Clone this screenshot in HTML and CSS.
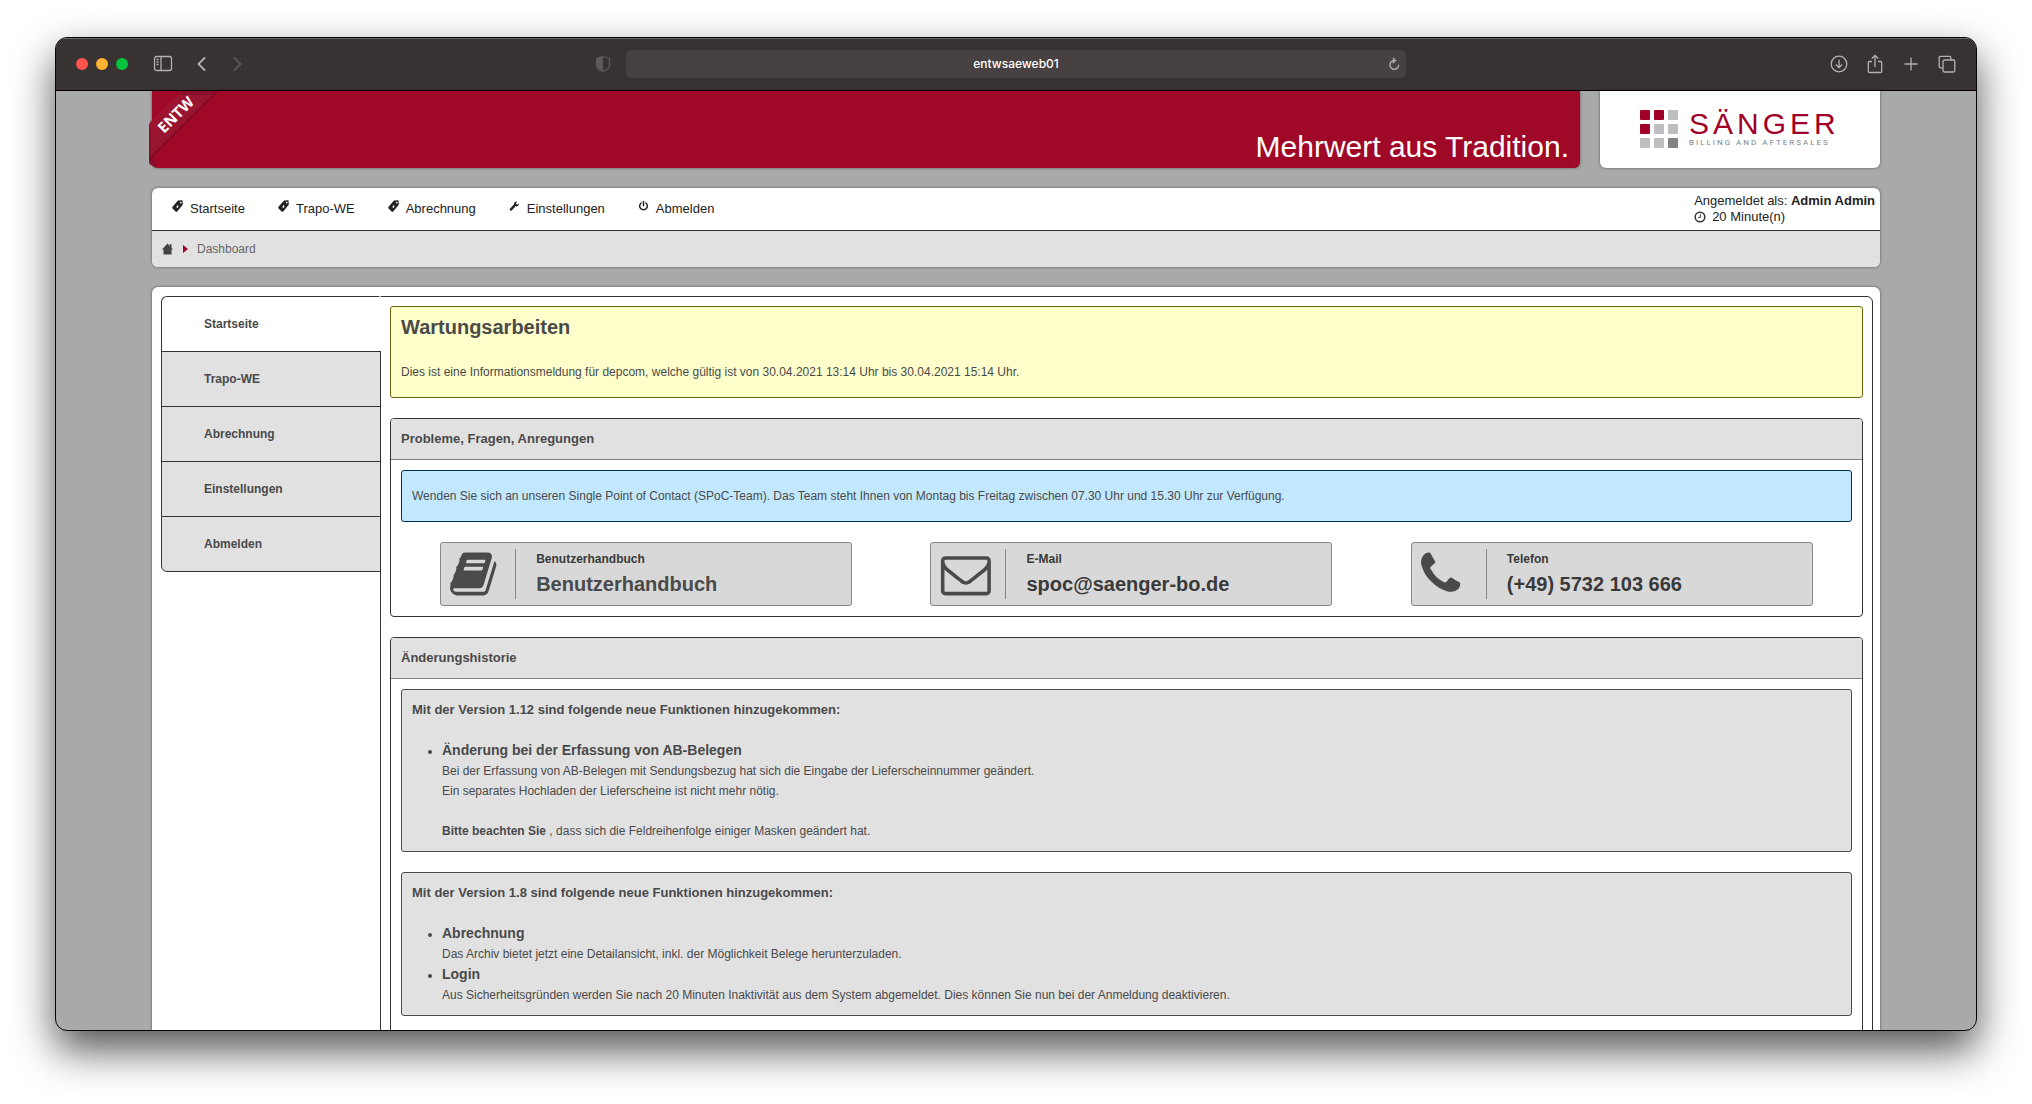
FILE: index.html
```html
<!DOCTYPE html>
<html lang="de">
<head>
<meta charset="utf-8">
<title>Dashboard</title>
<meta name="viewport" content="width=device-width, initial-scale=1">
<link rel="stylesheet" href="styles.css">
</head>
<body>
<svg class="sprite" aria-hidden="true">
  <symbol id="tag" viewBox="0 0 11 12"><path fill-rule="evenodd" d="M6 .6 10.500.3 10.800 4.700 5 11.700 3.800 11.700.3 8.300V7.100ZM8.700 1.700a.8.800 0 1 0 .1 0ZM5.400 5 6.500 6.100 5.900 8.100 4.300 7.300Z"/></symbol>
  <symbol id="wrench" viewBox="0 0 12 12"><path d="M10.900 3.200 9 4.700 7.500 3.300 8.800 1.300C7.200.8 5.400 2 5.500 4L1 8.900c-1 1.300.6 2.900 2 1.900L7.200 6.300c2.200.2 4-1.200 3.700-3.100Z"/></symbol>
  <symbol id="power" viewBox="0 0 12 12"><g fill="none" stroke="currentColor" stroke-width="1.600" stroke-linecap="round"><path d="M3.400 2.700a4.200 4.200 0 1 0 5.200 0"/><path d="M6 1v4.600"/></g></symbol>
</svg>
<div class="window">
  <header class="toolbar">
    <div class="tools tools-left">
      <span class="lights"><i class="light red"></i><i class="light amber"></i><i class="light green"></i></span>
      <button class="tool" type="button" aria-label="Seitenleiste"><svg width="20" height="18" viewBox="0 0 20 18"><rect x="1.500" y="1.500" width="17" height="14" rx="2"/><path d="M8 1.500v14M3.500 4.500h2M3.500 7h2M3.500 9.500h2"/></svg></button>
      <button class="tool back" type="button" aria-label="Zurück"><svg width="10" height="16" viewBox="0 0 10 16"><path stroke-width="1.800" d="M8 1.500 1.500 8 8 14.500"/></svg></button>
      <button class="tool forward" type="button" aria-label="Vorwärts" disabled><svg width="10" height="16" viewBox="0 0 10 16"><path stroke-width="1.800" d="M2 1.500 8.500 8 2 14.500"/></svg></button>
      <button class="tool shield" type="button" aria-label="Datenschutzbericht"><svg width="16" height="18" viewBox="0 0 16 18"><path fill="currentColor" stroke="none" d="M8 .8 1 3v7.500c0 3 3.500 5 7 6.800Z"/><path d="M8 1.500 14.500 3.500v7c0 2.600-3.500 4.800-6.500 6"/></svg></button>
    </div>
    <div class="address"><input type="text" value="entwsaeweb01" aria-label="Adresse">
      <button class="tool reload" type="button" aria-label="Neu laden"><svg width="12" height="14" viewBox="0 0 12 14"><path d="M6.500 3.500a4.400 4.400 0 1 0 4.200 4.300M4.800 1l2.700 2.500-2.700 2.600"/></svg></button>
    </div>
    <div class="tools tools-right">
      <button class="tool" type="button" aria-label="Downloads"><svg width="18" height="18" viewBox="0 0 18 18"><circle cx="9" cy="9" r="7.800"/><path d="M9 4.800v7.700M5.800 9.500 9 12.700l3.200-3.200"/></svg></button>
      <button class="tool" type="button" aria-label="Teilen"><svg width="18" height="20" viewBox="0 0 18 20"><path d="M6 7.500H3.500a1.200 1.200 0 0 0-1.200 1.200v8.600a1.200 1.200 0 0 0 1.200 1.200h11a1.200 1.200 0 0 0 1.200-1.200V8.700a1.200 1.200 0 0 0-1.200-1.200H12M9 13V1.500M5.800 4.500 9 1.300l3.200 3.200"/></svg></button>
      <button class="tool" type="button" aria-label="Neuer Tab"><svg width="18" height="18" viewBox="0 0 18 18"><path d="M9 2.500v13M2.500 9h13"/></svg></button>
      <button class="tool" type="button" aria-label="Tabübersicht"><svg width="18" height="18" viewBox="0 0 18 18"><rect x="5" y="5" width="11.800" height="12" rx="1.500"/><path d="M5 12.800H2.300a1.100 1.100 0 0 1-1.100-1.100V2.500a1.100 1.100 0 0 1 1.100-1.100h9.400a1.100 1.100 0 0 1 1.100 1.100V5"/></svg></button>
    </div>
  </header>
  <div class="page">
    <div class="head">
      <div class="banner card">
        <svg class="ribbon" width="72" height="78" viewBox="0 0 72 78">
          <defs><linearGradient id="band" x1="0" y1="0" x2="1" y2="1"><stop offset=".2" stop-color="#a01230"/><stop offset=".5" stop-color="#971630"/></linearGradient></defs>
          <path fill="#8a0c28" d="M1 62v9q0 2 2 3l5 3L6 66Z"/>
          <path fill="#7c0520" opacity=".7" d="M1 70 71 0h-6L1 64Z"/>
          <path fill="url(#band)" d="M1 67V34l2-4L34 0h34Z"/>
          <path fill="#6d0a20" opacity=".35" d="M34 0h34l-4 4H32ZM1 34l2-4v35l-2 2Z"/>
          <text class="ribbon-text" transform="translate(16 43) rotate(-45)">ENTW</text>
        </svg>
        <p class="claim">Mehrwert aus Tradition.</p>
      </div>
      <a class="brand card" href="#">
        <svg width="38" height="38" viewBox="0 0 38 38" aria-hidden="true"><g fill="#bcbec0"><rect x="28" width="10" height="10" rx="1"/><rect x="14" y="14" width="10" height="10" rx="1"/><rect x="28" y="14" width="10" height="10" rx="1"/><rect y="28" width="10" height="10" rx="1"/><rect x="14" y="28" width="10" height="10" rx="1"/></g><g fill="#a00028"><rect width="10" height="10" rx="1"/><rect x="14" width="10" height="10" rx="1"/><rect y="14" width="10" height="10" rx="1"/></g><rect x="28" y="28" width="10" height="10" rx="1" fill="#808285"/></svg>
        <span class="brand-text"><span class="brand-name">SÄNGER</span><span class="brand-sub">BILLING AND AFTERSALES</span></span>
      </a>
    </div>
    <div class="menu card">
      <div class="menu-row">
        <nav class="menu-items">
          <a href="#"><svg class="menu-icon"><use href="#tag"/></svg>Startseite</a>
          <a href="#"><svg class="menu-icon"><use href="#tag"/></svg>Trapo-WE</a>
          <a href="#"><svg class="menu-icon"><use href="#tag"/></svg>Abrechnung</a>
          <a href="#"><svg class="menu-icon"><use href="#wrench"/></svg>Einstellungen</a>
          <a href="#"><svg class="menu-icon"><use href="#power"/></svg>Abmelden</a>
        </nav>
        <div class="user">
          <p>Angemeldet als: <b>Admin Admin</b></p>
          <p class="session"><svg width="12" height="12" viewBox="0 0 12 12" fill="none" stroke="#333"><circle cx="6" cy="6" r="4.800" stroke-width="1.500"/><path d="M6.300 3.200v3.300H4.200"/></svg>20 Minute(n)</p>
        </div>
      </div>
      <div class="crumbs">
        <a href="#" aria-label="Start"><svg width="12" height="12" viewBox="0 0 12 12"><path fill="#444" d="M5.500.6 0 6.500H1.500V11.500h8V6.500h1.600L9.500 4.700V1H7.800v2Z"/></svg></a>
        <svg width="5" height="8" viewBox="0 0 5 8"><path fill="#a00028" d="M0 0 5 4 0 8Z"/></svg>
        <span>Dashboard</span>
      </div>
    </div>
    <div class="main card">
      <nav class="side">
        <a class="active" href="#">Startseite</a>
        <a href="#">Trapo-WE</a>
        <a href="#">Abrechnung</a>
        <a href="#">Einstellungen</a>
        <a href="#">Abmelden</a>
      </nav>
      <main class="content">
        <section class="alert">
          <h1>Wartungsarbeiten</h1>
          <p>Dies ist eine Informationsmeldung für depcom, welche gültig ist von 30.04.2021 13:14 Uhr bis 30.04.2021 15:14 Uhr.</p>
        </section>
        <section class="panel">
          <h2>Probleme, Fragen, Anregungen</h2>
          <div class="panel-body">
            <p class="info">Wenden Sie sich an unseren Single Point of Contact (SPoC-Team). Das Team steht Ihnen von Montag bis Freitag zwischen 07.30 Uhr und 15.30 Uhr zur Verfügung.</p>
            <div class="contacts">
              <div class="contact wide">
                <svg class="contact-icon" viewBox="0 0 1792 1792"><path d="M1639 478q40 57 18 129l-275 906q-19 64-76.500 107.500t-122.500 43.500h-923q-77 0-148.500-53.500t-99.500-131.500q-24-67-2-127 0-4 3-27t4-37q1-8-3-21.500t-3-19.500q2-11 8-21t16.500-23.500 16.500-23.500q23-38 45-91.500t30-91.500q3-10 .5-30t-.5-28q3-11 17-28t17-23q21-36 42-92t25-90q1-9-2.500-32t.5-28q4-13 22-30.500t22-22.500q19-26 42.500-84.500t27.500-96.500q1-8-3-25.500t-2-26.500q2-8 9-18t18-23 17-21q8-12 16.500-30.500t15-35 16-36 19.500-32 26.500-23.500 36-11.500 47.500 5.500l-1 3q38-9 51-9h761q74 0 114 56t18 130l-274 906q-36 119-71.500 153.500t-128.500 34.500h-869q-27 0-38 15-11 16-1 43 24 70 144 70h923q29 0 56-15.500t35-41.500l300-987q7-22 5-57 38 15 59 43zm-1064 2q-4 13 2 22.500t20 9.500h608q13 0 25.500-9.500t16.500-22.500l21-64q4-13-2-22.500t-20-9.500h-608q-13 0-25.500 9.500t-16.500 22.500zm-83 256q-4 13 2 22.500t20 9.500h608q13 0 25.500-9.500t16.500-22.500l21-64q4-13-2-22.500t-20-9.500h-608q-13 0-25.500 9.500t-16.500 22.500z"/></svg>
                <div class="contact-text"><h3>Benutzerhandbuch</h3><a href="#">Benutzerhandbuch</a></div>
              </div>
              <div class="contact">
                <svg class="contact-icon" viewBox="-32 0 1792 1792"><path d="M1664 1504v-768q-32 36-69 66-268 206-426 338-51 43-83 67t-86.500 48.500-102.500 24.500h-2q-48 0-102.500-24.500t-86.500-48.500-83-67q-158-132-426-338-37-30-69-66v768q0 13 9.500 22.500t22.500 9.500h1472q13 0 22.500-9.500t9.500-22.500zm0-1051v-24.500l-.5-13-3-12.500-5.500-9-9-7.500-14-2.500h-1472q-13 0-22.500 9.500t-9.500 22.500q0 168 147 284 193 152 401 317 6 5 35 29.500t46 37.500 44.500 31.500 50.500 27.500 43 9h2q20 0 43-9t50.500-27.500 44.500-31.500 46-37.500 35-29.500q208-165 401-317 54-43 100.500-115.500t46.500-131.500zm128-37v1088q0 66-47 113t-113 47h-1472q-66 0-113-47t-47-113v-1088q0-66 47-113t113-47h1472q66 0 113 47t47 113z"/></svg>
                <div class="contact-text"><h3>E-Mail</h3><p>spoc@saenger-bo.de</p></div>
              </div>
              <div class="contact">
                <svg class="contact-icon" viewBox="192 0 1792 1792"><path d="M1600 1240q0 27-10 70.500t-21 68.500q-21 50-122 106-94 51-186 51-27 0-52.500-3.500t-57.500-12.500-47.500-14.500-55.500-20.500-49-18q-98-35-175-83-128-79-264.500-215.500t-215.500-264.500q-48-77-83-175-3-9-18-49t-20.500-55.500-14.500-47.500-12.500-57.500-3.500-52.500q0-92 51-186 56-101 106-122 25-11 68.500-21t70.500-10q14 0 21 3 18 6 53 76 11 19 30 54t35 63.500 31 53.500q3 4 17.500 25t21.500 35.500 7 28.500q0 20-28.500 50t-62 55-62 53-28.500 46q0 9 5 22.500t8.500 20.500 14 24 11.500 19q76 137 174 235t235 174q2 1 19 11.500t24 14 20.500 8.500 22.500 5q18 0 46-28.500t53-62 55-62 50-28.500q14 0 28.500 7t35.500 21.500 25 17.500q25 15 53.500 31t63.500 35 54 30q70 35 76 53 3 7 3 21z"/></svg>
                <div class="contact-text"><h3>Telefon</h3><p>(+49) 5732 103 666</p></div>
              </div>
            </div>
          </div>
        </section>
        <section class="panel history">
          <h2>Änderungshistorie</h2>
          <div class="panel-body">
            <article class="note">
              <h3>Mit der Version 1.12 sind folgende neue Funktionen hinzugekommen:</h3>
              <ul>
                <li><h4>Änderung bei der Erfassung von AB-Belegen</h4>
                  <p>Bei der Erfassung von AB-Belegen mit Sendungsbezug hat sich die Eingabe der Lieferscheinnummer geändert.<br>Ein separates Hochladen der Lieferscheine ist nicht mehr nötig.<br><br><b>Bitte beachten Sie</b> , dass sich die Feldreihenfolge einiger Masken geändert hat.</p></li>
              </ul>
            </article>
            <article class="note">
              <h3>Mit der Version 1.8 sind folgende neue Funktionen hinzugekommen:</h3>
              <ul>
                <li><h4>Abrechnung</h4><p>Das Archiv bietet jetzt eine Detailansicht, inkl. der Möglichkeit Belege herunterzuladen.</p></li>
                <li><h4>Login</h4><p>Aus Sicherheitsgründen werden Sie nach 20 Minuten Inaktivität aus dem System abgemeldet. Dies können Sie nun bei der Anmeldung deaktivieren.</p></li>
              </ul>
            </article>
          </div>
        </section>
      </main>
    </div>
  </div>
</div>
</body>
</html>
```
FILE: styles.css
```css
* { box-sizing: border-box; }

body {
  display: flex;
  height: 100vh;
  margin: 0;
  padding: 37px 55px 73px;
  overflow: hidden;
  background: #fff;
  color: #4a4a4a;
  font: 12px/20px "Liberation Sans", Arial, sans-serif;
}

h1, h2, h3, h4, p, ul { margin: 0; padding: 0; }
a { color: inherit; text-decoration: none; }
svg { display: block; flex: none; }
.sprite { position: absolute; width: 0; height: 0; }

/* Browser window */
.window {
  display: flex;
  flex: 1;
  flex-direction: column;
  min-width: 0;
  overflow: hidden;
  border: 1px solid #050505;
  border-radius: 12px;
  background: #a9a9a9;
  box-shadow: 0 19px 42px rgba(0, 0, 0, .68);
}

.toolbar {
  display: grid;
  flex: none;
  grid-template-columns: 1fr 780px 1fr;
  align-items: center;
  height: 53px;
  border-bottom: 1px solid #000;
  background: #393232;
  box-shadow: inset 0 1px #6e6969;
}

.tools { display: flex; align-items: center; }
.tools-left { padding: 0 15px 0 20px; }
.tools-right { justify-content: flex-end; gap: 18px; padding-right: 20px; }
.lights { display: flex; gap: 8px; margin-right: 25px; }
.light { width: 12px; height: 12px; border-radius: 50%; }
.red { background: #ff544d; }
.amber { background: #ffb132; }
.green { background: #00c440; }

.tool {
  display: flex;
  padding: 0;
  border: 0;
  background: none;
  color: #b5b0b0;
}
.tool svg { fill: none; stroke: currentColor; stroke-width: 1.3; }
.back { margin-left: 24px; }
.forward { margin-left: 25px; color: #5d5757; }
.shield { margin-left: auto; color: #5d5757; }

.address {
  display: flex;
  align-items: center;
  height: 28px;
  padding: 0 6px 0 18px;
  border-radius: 6px;
  background: #484141;
}
.address input {
  flex: 1;
  min-width: 0;
  padding: 0;
  border: 0;
  background: none;
  color: #fff;
  font: 500 12px/20px Inter, sans-serif;
  text-align: center;
}
.tools-right .tool { width: 18px; justify-content: center; }

/* Page */
.page {
  display: flex;
  flex: 1;
  flex-direction: column;
  gap: 20px;
  width: 90%;
  min-height: 0;
  margin: 0 auto;
}
.card { border-radius: 6px; background: #fff; box-shadow: 0 0 3px rgba(0, 0, 0, .5); }

.head { display: flex; flex: none; gap: 20px; }
.head .card { border-radius: 0 0 6px 6px; }
.banner {
  position: relative;
  display: flex;
  flex: 1;
  align-items: flex-end;
  justify-content: flex-end;
  height: 77px;
  padding: 0 11px 3px;
  background: #a00828;
}
.ribbon { position: absolute; top: 0; left: -4px; }
.ribbon-text { fill: #fff; font: bold 15px "Open Sans", sans-serif; }
.claim { color: #fff; font-size: 30px; line-height: 36px; }
.brand { display: flex; gap: 11px; width: 280px; padding: 19px 0 0 40px; }
.brand-text { display: flex; flex-direction: column; }
.brand-name { color: #a00028; font-size: 30px; line-height: 28px; letter-spacing: 4px; }
.brand-sub { color: #808285; font: 8px/10px Roboto, sans-serif; letter-spacing: 2px; }

.menu { flex: none; overflow: hidden; color: #222; }
.menu-row {
  display: flex;
  align-items: center;
  justify-content: space-between;
  height: 43px;
  padding: 0 5px 0 20px;
  border-bottom: 1px solid #333;
  font-size: 13px;
  line-height: 16px;
}
.menu-items { display: flex; gap: 33px; }
.menu-items a { display: flex; gap: 7px; line-height: 18px; }
.menu-icon { width: 11px; height: 12px; fill: currentColor; }
.session { display: flex; align-items: center; gap: 6px; }
.crumbs {
  display: flex;
  align-items: center;
  gap: 9px;
  height: 36px;
  padding: 0 10px;
  background: #e1e1e1;
  color: #666;
}

.main { display: flex; flex: none; align-items: stretch; padding: 9px 7px 9px 9px; }
.side { z-index: 1; display: flex; flex: none; flex-direction: column; width: 220px; }
.side a {
  padding: 17px 0 17px 42px;
  border: solid #333;
  border-width: 1px 1px 0;
  background: #e1e1e1;
  font-weight: bold;
}
.side .active {
  border-right: 2px solid #fff;
  border-top-left-radius: 6px;
  background: #fff;
}
.side a:last-child { border-bottom-width: 1px; border-bottom-left-radius: 6px; }

.content {
  display: flex;
  flex: 1;
  flex-direction: column;
  gap: 20px;
  min-width: 0;
  margin-left: -1px;
  padding: 9px;
  border: 1px solid #333;
  border-radius: 0 6px 6px 0;
}

.alert {
  padding: 10px 10px 15px;
  border: 1px solid #6b6310;
  border-radius: 3px;
  background: #ffffcb;
}
.alert h1 { margin-bottom: 25px; font-size: 20px; line-height: 20px; }

.panel { overflow: hidden; border: 1px solid #333; border-radius: 4px; }
.panel h2 {
  padding: 0 10px;
  border-bottom: 1px solid #808080;
  background: #e1e1e1;
  font-size: 13px;
  line-height: 40px;
}
.panel-body { display: flex; flex-direction: column; gap: 20px; padding: 10px; }
.history { padding-bottom: 20px; }
.info {
  padding: 15px 10px;
  border: 1px solid #00304d;
  border-radius: 3px;
  background: #c2e8ff;
}

.contacts { display: flex; justify-content: space-around; }
.contact {
  display: flex;
  flex: 0 1 402px;
  gap: 15px;
  padding: 6px 9px;
  border: 1px solid #888;
  border-radius: 3px;
  background: #d8d8d8;
}
.contact.wide { flex-basis: 412px; }
.contact-icon { width: 50px; height: 50px; overflow: visible; fill: #4a4a4a; }
.contact-text { padding-left: 20px; border-left: 1px solid #888; color: #3a3a3a; font-weight: bold; }
.contact-text h3 { font-size: 12px; }
.contact-text a, .contact-text p { display: block; font-size: 20px; line-height: 30px; }
.contact-text a { color: #4a4a4a; }

.note { padding: 10px; border: 1px solid #4a4a4a; border-radius: 3px; background: #e1e1e1; }
.note h3 { margin-bottom: 20px; font-size: 13px; }
.note ul { padding-left: 30px; }
.note h4 { font-size: 14px; line-height: 21px; }
```
